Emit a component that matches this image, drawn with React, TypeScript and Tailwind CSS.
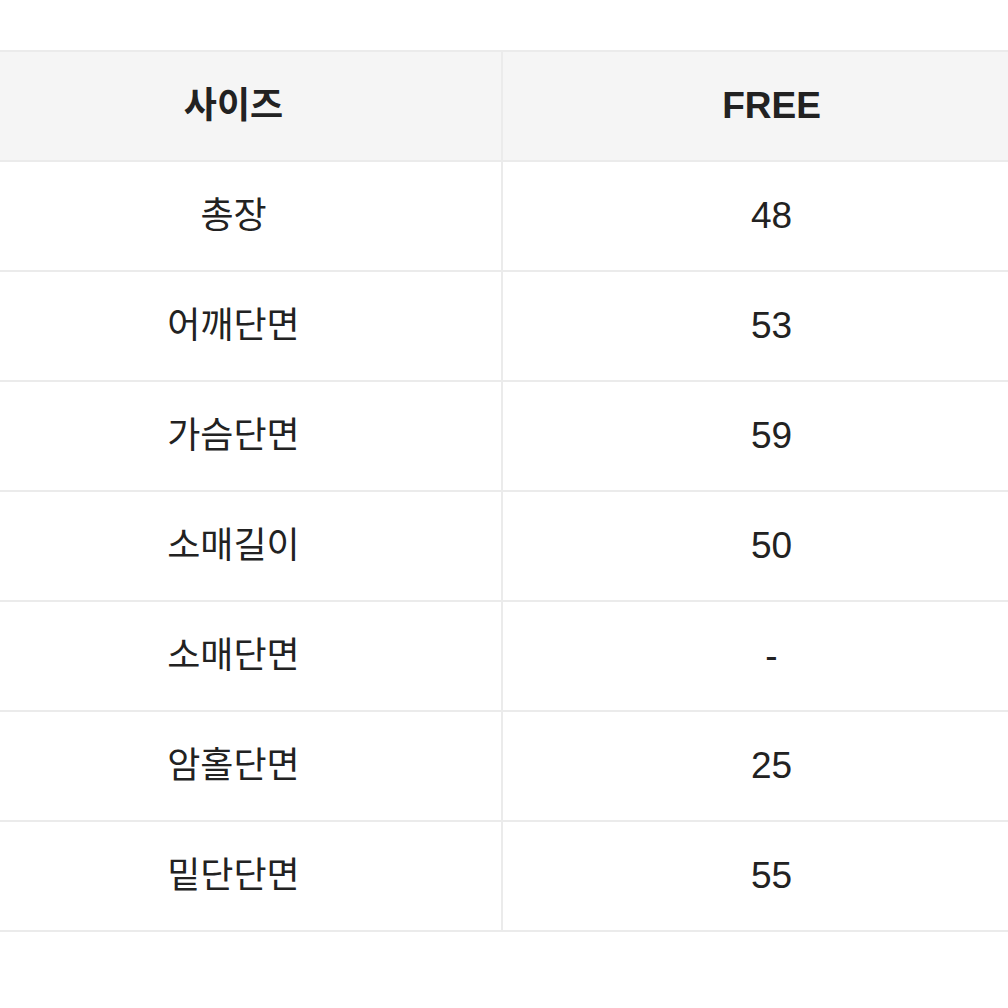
const rows: [string, string][] = [
  ["총장", "48"],
  ["어깨단면", "53"],
  ["가슴단면", "59"],
  ["소매길이", "50"],
  ["소매단면", "-"],
  ["암홀단면", "25"],
  ["밑단단면", "55"],
];

export default function App() {
  return (
    <div
      className="w-[1008px] h-[1008px] bg-white overflow-hidden pt-[50px] text-[#222]"
      style={{ fontFamily: '"Liberation Sans", "Noto Sans CJK KR", sans-serif' }}
    >
      <div className="-ml-[34px] w-[1076px] border-t-2 border-[#ebebeb]">
        {/* header */}
        <div className="flex h-[110px] bg-[#f5f5f5] border-b-2 border-[#ebebeb]">
          <div className="w-[535px] flex items-center justify-center text-[36px] font-bold">사이즈</div>
          <div className="w-[2px] bg-[#ebebeb]" />
          <div className="w-[537px] flex items-center justify-center text-[37px] font-bold">FREE</div>
        </div>
        {rows.map(([label, value]) => (
          <div key={label} className="flex h-[110px] border-b-2 border-[#ebebeb]">
            <div className="w-[535px] flex items-center justify-center text-[36px]">{label}</div>
            <div className="w-[2px] bg-[#ebebeb]" />
            <div className="w-[537px] flex items-center justify-center text-[37px]">{value}</div>
          </div>
        ))}
      </div>
    </div>
  );
}
